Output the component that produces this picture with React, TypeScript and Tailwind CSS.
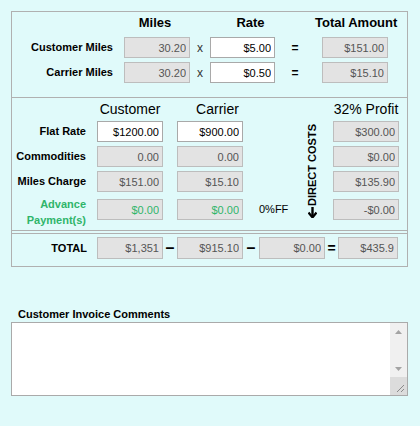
import React from 'react'

const font = { fontFamily: '"Liberation Sans", Arial, sans-serif' }

type FieldProps = {
  value: string
  editable?: boolean
  green?: boolean
  className?: string
}

function Field({ value, editable, green, className }: FieldProps) {
  const tone = editable
    ? 'bg-white border-[#a9a9a9] text-black'
    : green
      ? 'bg-[#e3e3e3] border-[#bdbdbd] text-[#2fb56a]'
      : 'bg-[#e3e3e3] border-[#bdbdbd] text-[#555]'
  return (
    <input
      readOnly
      value={value}
      className={`block h-[21px] border px-[3px] text-right text-[11px] outline-none ${tone} ${className ?? 'w-[66px]'}`}
    />
  )
}

function MilesRow({ label, miles, rate, total }: { label: string; miles: string; rate: string; total: string }) {
  return (
    <div className="flex h-[21px] items-center">
      <div className="w-[101px] text-right text-[11px] font-bold">{label}</div>
      <Field value={miles} className="ml-[11px] w-[66px]" />
      <div className="w-[20px] text-center text-[12px] text-[#333]">x</div>
      <Field value={rate} editable className="w-[65px]" />
      <div className="w-[40px] text-center text-[12px] font-bold">=</div>
      <Field value={total} className="ml-[7px] w-[66px]" />
    </div>
  )
}

function Label({ children }: { children: React.ReactNode }) {
  return <div className="flex h-[21px] items-center justify-end pr-[11px] text-[11px] font-bold">{children}</div>
}

export default function App() {
  return (
    <div className="min-h-[426px] bg-[#e0fafa] px-[11px] pt-[11px] text-black" style={font}>
      <div className="w-[397px] border border-[#b0b0b0]">
        {/* miles x rate */}
        <div className="border-b border-[#b0b0b0] pb-[14px] pt-[3px]">
          <div className="flex h-[16px] items-center whitespace-nowrap text-[13px] font-bold leading-[16px]">
            <div className="w-[112px]" />
            <div className="w-[62px] text-center">Miles</div>
            <div className="w-[129px] text-center">Rate</div>
            <div className="w-[74px] text-center">Total Amount</div>
          </div>
          <div className="mt-[6px] flex flex-col gap-[4px]">
            <MilesRow label="Customer Miles" miles="30.20" rate="$5.00" total="$151.00" />
            <MilesRow label="Carrier Miles" miles="30.20" rate="$0.50" total="$15.10" />
          </div>
        </div>

        {/* customer / carrier / profit */}
        <div className="border-b border-[#b0b0b0] pb-[2px] pt-[4px]">
          <div className="grid grid-cols-[85px_80px_66px_57px_33px_66px] grid-rows-[15px_21px_21px_21px_32px] gap-y-[4px]">
            <div />
            <div className="w-[66px] text-center text-[14px] leading-[15px]">Customer</div>
            <div className="pl-[15px] text-center text-[14px] leading-[15px]">Carrier</div>
            <div />
            <div />
            <div className="text-center text-[14px] leading-[15px]">32% Profit</div>

            <Label>Flat Rate</Label>
            <Field value="$1200.00" editable />
            <Field value="$900.00" editable />
            <div />
            <div className="row-span-4 flex flex-col items-center justify-center pb-[7px] pr-[9px]">
              <span className="rotate-180 text-[11px] font-bold leading-[11px] [writing-mode:vertical-rl]">
                DIRECT COSTS
              </span>
              <svg width="9" height="11" viewBox="0 0 9 11" className="mt-[1px]">
                <path d="M4.5 0 V9" stroke="#000" strokeWidth="2.4" />
                <path d="M0.5 5.5 L4.5 10.5 L8.5 5.5" fill="none" stroke="#000" strokeWidth="2.2" />
              </svg>
            </div>
            <Field value="$300.00" />

            <Label>Commodities</Label>
            <Field value="0.00" />
            <Field value="0.00" />
            <div />
            <Field value="$0.00" />

            <Label>Miles Charge</Label>
            <Field value="$151.00" />
            <Field value="$15.10" />
            <div />
            <Field value="$135.90" />

            <div className="pr-[11px] text-right text-[11px] font-bold leading-[16px] text-[#2fb56a]">
              Advance
              <br />
              Payment(s)
            </div>
            <Field value="$0.00" green className="mt-[3px] w-[66px]" />
            <Field value="$0.00" green className="mt-[3px] w-[66px]" />
            <div className="mt-[3px] flex h-[21px] items-center pl-[16px] text-[11px]">0%FF</div>
            <Field value="-$0.00" className="mt-[3px] w-[66px]" />
          </div>
        </div>

        {/* totals */}
        <div className="mt-[2px] flex items-center border-t border-[#b0b0b0] pb-[7px] pt-[3px]">
          <div className="w-[75px] text-right text-[11px] font-bold">TOTAL</div>
          <Field value="$1,351" className="ml-[10px] h-[22px] w-[66px]" />
          <div className="w-[14px] text-center text-[16px] font-bold leading-[16px]">–</div>
          <Field value="$915.10" className="h-[22px] w-[66px]" />
          <div className="w-[16px] text-center text-[16px] font-bold leading-[16px]">–</div>
          <Field value="$0.00" className="h-[22px] w-[66px]" />
          <div className="w-[13px] text-center text-[14px] font-bold leading-[16px]">=</div>
          <Field value="$435.9" className="h-[22px] w-[60px]" />
        </div>
      </div>

      {/* comments */}
      <div className="mt-[41px] pl-[7px] text-[11px] font-bold leading-[13px]">Customer Invoice Comments</div>
      <div className="mt-[1px] flex h-[74px] w-[397px] border border-[#aaa] bg-white">
        <textarea className="flex-1 resize-none bg-white p-[2px] text-[12px] outline-none" />
        <div className="flex w-[17px] flex-col bg-[#f0f0f0]">
          <div className="flex h-[17px] items-center justify-center">
            <svg width="7" height="4" viewBox="0 0 7 4">
              <path d="M0 4 L3.5 0 L7 4 Z" fill="#a3a3a3" />
            </svg>
          </div>
          <div className="flex-1" />
          <div className="flex h-[17px] items-center justify-center">
            <svg width="7" height="4" viewBox="0 0 7 4">
              <path d="M0 0 L3.5 4 L7 0 Z" fill="#a3a3a3" />
            </svg>
          </div>
          <div className="flex h-[18px] items-end justify-end bg-[#dcdcdc] p-[2px]">
            <svg width="10" height="10" viewBox="0 0 10 10">
              <path d="M9 2 L2 9 M9 6 L6 9" stroke="#8a8a8a" strokeWidth="1" />
            </svg>
          </div>
        </div>
      </div>
    </div>
  )
}
